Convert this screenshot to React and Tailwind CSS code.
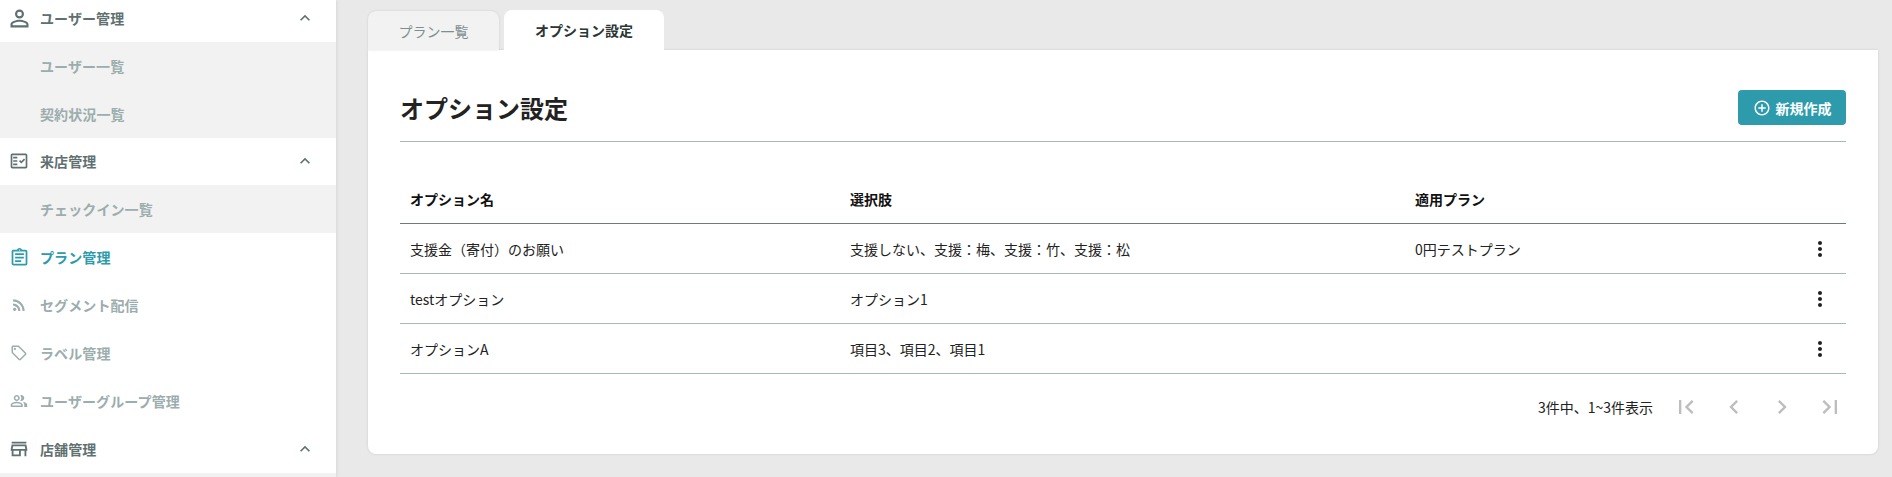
import React from 'react';
import {
  MdPersonOutline,
  MdOutlineFactCheck,
  MdOutlineAssignment,
  MdRssFeed,
  MdOutlineLocalOffer,
  MdOutlinePeopleAlt,
  MdOutlineStore,
  MdExpandLess,
  MdAddCircleOutline,
  MdMoreVert,
  MdFirstPage,
  MdLastPage,
  MdChevronLeft,
  MdChevronRight,
} from 'react-icons/md';

const rows = [
  { name: '支援金（寄付）のお願い', choices: '支援しない、支援：梅、支援：竹、支援：松', plan: '0円テストプラン' },
  { name: 'testオプション', choices: 'オプション1', plan: '' },
  { name: 'オプションA', choices: '項目3、項目2、項目1', plan: '' },
];

// サイドバーの親メニュー
const NavHeader = ({ icon: Icon, label, size = 'text-[24px]', className = 'h-12' }) => (
  <div className={`flex items-center bg-white text-[#5f7070] ${className}`}>
    <div className="flex w-10 shrink-0 justify-center pr-[2px]">
      <Icon className={size} />
    </div>
    <span className="flex-1 font-bold tracking-[0.1px]">{label}</span>
    <MdExpandLess className="mr-[21px] text-[20px]" />
  </div>
);

const NavSub = ({ label }) => (
  <div className="flex h-12 items-center bg-[#f2f2f2] pl-10 font-bold tracking-[0.1px] text-[#9badad]">{label}</div>
);

const NavItem = ({ icon: Icon, label, size = 'text-[18px]', active = false }) => (
  <div className={`flex h-12 items-center bg-white font-bold tracking-[0.1px] ${active ? 'text-[#2d9bac]' : 'text-[#9badad]'}`}>
    <div className="flex w-10 shrink-0 justify-center pr-[2px]">
      <Icon className={size} />
    </div>
    <span>{label}</span>
  </div>
);

const Sidebar = () => (
  <aside className="h-[477px] w-[336px] shrink-0 overflow-hidden bg-[#f2f2f2] shadow-[0_0_4px_rgba(0,0,0,0.12)]">
    <NavHeader icon={MdPersonOutline} label="ユーザー管理" size="text-[27px]" className="h-[42px] pb-[6px]" />
    <NavSub label="ユーザー一覧" />
    <NavSub label="契約状況一覧" />
    <NavHeader icon={MdOutlineFactCheck} label="来店管理" size="text-[20px]" className="h-[47px] pb-[2px]" />
    <NavSub label="チェックイン一覧" />
    <NavItem icon={MdOutlineAssignment} label="プラン管理" size="text-[21px]" active />
    <NavItem icon={MdRssFeed} label="セグメント配信" />
    <NavItem icon={MdOutlineLocalOffer} label="ラベル管理" />
    <NavItem icon={MdOutlinePeopleAlt} label="ユーザーグループ管理" />
    <NavHeader icon={MdOutlineStore} label="店舗管理" size="text-[22px]" />
  </aside>
);

const Tabs = () => (
  <div className="flex h-[50px] items-end gap-[5px]">
    <div className="flex h-[39px] w-[131px] items-center justify-center rounded-t-lg bg-[#f2f2f2] text-[#7f8f8f] shadow-[0_0_2px_rgba(0,0,0,0.15)]">
      プラン一覧
    </div>
    <div className="flex h-10 w-[160px] items-center justify-center rounded-t-lg bg-white font-bold text-[#2b3535]">
      オプション設定
    </div>
  </div>
);

const Pagination = () => (
  <div className="-mr-2 flex h-[66px] items-center justify-end">
    <span className="mr-[9px] text-[#222]">3件中、1~3件表示</span>
    {[MdFirstPage, MdChevronLeft, MdChevronRight, MdLastPage].map((Icon, i) => (
      <div key={i} className="flex h-12 w-12 items-center justify-center text-[#bdbdbd]">
        <Icon className="text-[28px]" />
      </div>
    ))}
  </div>
);

const cell = 'px-2.5 border-b border-[#aab8b8]';
const headCell = 'px-2.5 border-b border-[#6f7b7b] font-bold';

export default function App() {
  return (
    <div className="flex h-[477px] w-[1892px] overflow-hidden bg-[#e9e9e9] text-sm font-['Noto_Sans_CJK_JP',sans-serif]">
      <Sidebar />
      <main className="flex-1 pl-8 pr-[14px]">
        <Tabs />
        <div className="h-[404px] rounded-b-lg bg-white px-8 pt-10 shadow-[0_0_3px_rgba(0,0,0,0.12)]">
          <div className="flex items-center justify-between border-b border-[#aab8b8] pb-4">
            <h1 className="text-2xl font-bold text-[#222]">オプション設定</h1>
            <button className="flex h-[35px] w-[108px] items-center justify-center gap-[5px] rounded bg-[#2d9bac] font-bold text-white">
              <MdAddCircleOutline className="text-[18px]" />
              新規作成
            </button>
          </div>
          <table className="mt-8 w-full table-fixed border-separate border-spacing-0">
            <colgroup>
              <col className="w-[440px]" />
              <col className="w-[565px]" />
              <col />
              <col className="w-[48px]" />
            </colgroup>
            <thead>
              <tr className="h-[50px] text-left text-[#111]">
                <th className={headCell}>オプション名</th>
                <th className={headCell}>選択肢</th>
                <th className={headCell}>適用プラン</th>
                <th className={headCell} />
              </tr>
            </thead>
            <tbody>
              {rows.map((row) => (
                <tr key={row.name} className="h-[50px] text-[#222]">
                  <td className={cell}>{row.name}</td>
                  <td className={cell}>{row.choices}</td>
                  <td className={cell}>{row.plan}</td>
                  <td className="border-b border-[#aab8b8]">
                    <div className="flex justify-center pr-[4px] text-[#222]">
                      <MdMoreVert className="text-[24px]" />
                    </div>
                  </td>
                </tr>
              ))}
            </tbody>
          </table>
          <Pagination />
        </div>
      </main>
    </div>
  );
}
